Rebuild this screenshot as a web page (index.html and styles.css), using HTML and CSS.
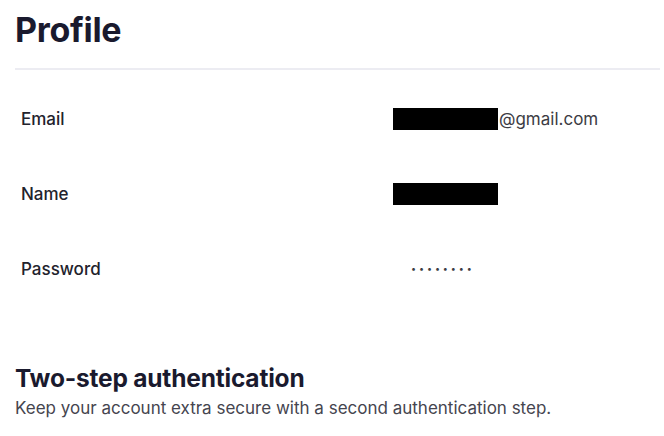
FILE: index.html
```html
<!DOCTYPE html>
<html>
<head>
<meta charset="utf-8">
<link rel="stylesheet" href="styles.css">
</head>
<body>
<main class="page">
  <h1 class="title">Profile</h1>
  <div class="divider"></div>
  <div class="rows">
    <div class="row">
      <span class="label">Email</span>
      <span class="value"><span class="redact"></span><span class="email-domain">@gmail.com</span></span>
    </div>
    <div class="row">
      <span class="label">Name</span>
      <span class="value"><span class="redact"></span></span>
    </div>
    <div class="row">
      <span class="label">Password</span>
      <span class="value"><span class="dots">••••••••</span></span>
    </div>
  </div>
  <section class="twostep">
    <h2 class="subtitle">Two-step authentication</h2>
    <p class="desc">Keep your account extra secure with a second authentication step.</p>
  </section>
</main>
</body>
</html>
```

FILE: styles.css
```css
* { box-sizing: border-box; }
html, body { margin: 0; padding: 0; background: #ffffff; }
body { font-family: Inter, "Noto Sans", sans-serif; color: #1b1b2b; }
.page { padding: 9px 0 0 15px; }
.title {
  margin: 0;
  font-size: 34px;
  line-height: 42px;
  font-weight: 700;
  color: #1a1a2e;
  letter-spacing: -0.3px;
}
.divider {
  margin-top: 17px;
  margin-right: 4px;
  height: 2px;
  background: #ececf2;
}
.rows {
  display: flex;
  flex-direction: column;
  padding-top: 11px;
}
.row {
  display: grid;
  grid-template-columns: 372px 1fr;
  align-items: center;
  height: 75px;
  padding-left: 6px;
}
.label {
  font-size: 17px;
  font-weight: 500;
  color: #22222c;
}
.value { display: flex; align-items: center; }
.redact {
  display: inline-block;
  width: 105px;
  height: 22px;
  background: #000;
}
.email-domain {
  font-size: 17px;
  color: #3c3c44;
  margin-left: 1px;
}
.dots {
  margin-left: 18px;
  font-size: 9px;
  letter-spacing: 2.9px;
  color: #3c3c44;
}
.twostep { margin-top: 57px; }
.subtitle {
  margin: 0;
  font-size: 24.5px;
  line-height: 30px;
  font-weight: 700;
  color: #1a1a2e;
  letter-spacing: -0.2px;
}
.desc {
  margin: 4px 0 0;
  font-size: 17px;
  line-height: 22px;
  color: #45454f;
}
```
